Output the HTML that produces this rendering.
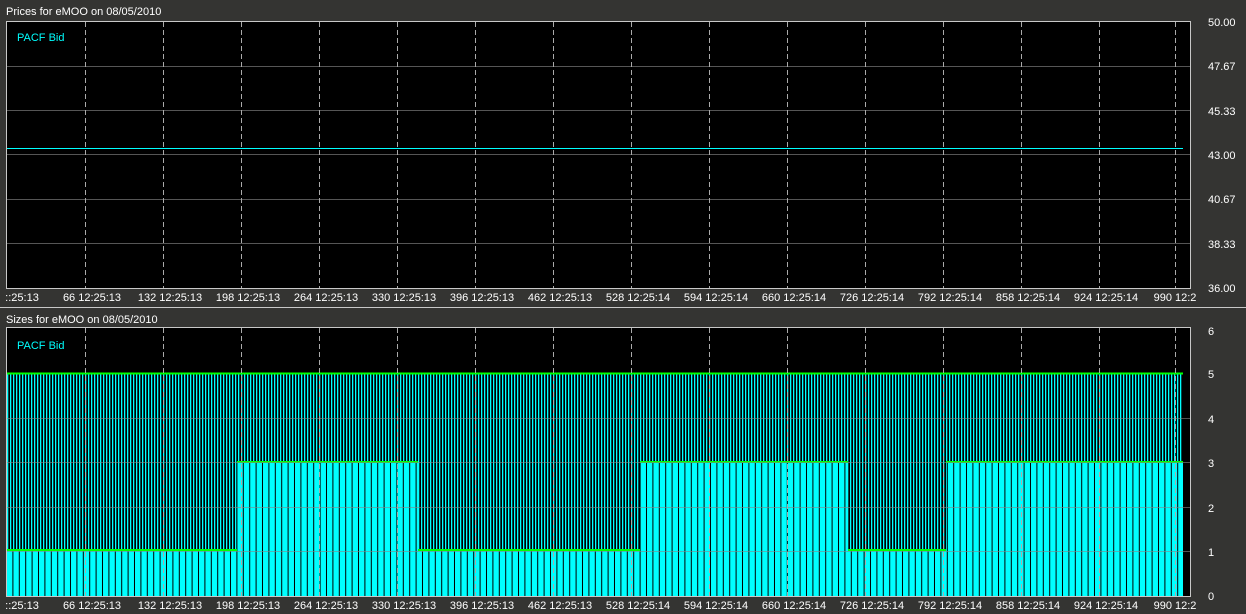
<!DOCTYPE html>
<html><head><meta charset="utf-8"><style>
html,body{margin:0;padding:0;background:#343432;width:1246px;height:614px;overflow:hidden}
svg text{font-family:"Liberation Sans",sans-serif;font-size:11px;fill:#fff}
</style></head><body>
<svg width="1246" height="614" xmlns="http://www.w3.org/2000/svg">
<defs>
<pattern id="thin" x="7" y="0" width="3" height="10" patternUnits="userSpaceOnUse">
<rect width="3" height="10" fill="#000"/><rect width="1.3" height="10" fill="#00ffff"/></pattern>
<pattern id="wide" x="7" y="0" width="6.4" height="10" patternUnits="userSpaceOnUse">
<rect width="6.4" height="10" fill="#00ffff"/><rect x="5.4" width="1" height="10" fill="#000"/></pattern>
</defs>
<text x="6" y="15">Prices for  eMOO  on  08/05/2010</text>
<rect x="6.5" y="21.5" width="1184" height="267" fill="#000" stroke="#c8c8c8"/>
<g stroke="#555" stroke-width="1">
<line x1="7" x2="1190" y1="66.5" y2="66.5"/><line x1="7" x2="1190" y1="110.5" y2="110.5"/>
<line x1="7" x2="1190" y1="154.5" y2="154.5"/><line x1="7" x2="1190" y1="199.5" y2="199.5"/>
<line x1="7" x2="1190" y1="243.5" y2="243.5"/></g>
<g stroke="#aaa" stroke-dasharray="5,3">
<line x1="85.5" x2="85.5" y1="22" y2="288"/><line x1="163.5" x2="163.5" y1="22" y2="288"/><line x1="241.5" x2="241.5" y1="22" y2="288"/><line x1="319.5" x2="319.5" y1="22" y2="288"/><line x1="397.5" x2="397.5" y1="22" y2="288"/><line x1="475.5" x2="475.5" y1="22" y2="288"/><line x1="553.5" x2="553.5" y1="22" y2="288"/><line x1="631.5" x2="631.5" y1="22" y2="288"/><line x1="709.5" x2="709.5" y1="22" y2="288"/><line x1="787.5" x2="787.5" y1="22" y2="288"/><line x1="865.5" x2="865.5" y1="22" y2="288"/><line x1="943.5" x2="943.5" y1="22" y2="288"/><line x1="1021.5" x2="1021.5" y1="22" y2="288"/><line x1="1099.5" x2="1099.5" y1="22" y2="288"/><line x1="1175.5" x2="1175.5" y1="22" y2="288"/></g>
<line x1="7" x2="1183" y1="148.5" y2="148.5" stroke="#00ffff"/>
<text x="17" y="41" style="fill:#00ffff">PACF Bid</text>
<g>
<text x="1208" y="26">50.00</text><text x="1208" y="70">47.67</text><text x="1208" y="115">45.33</text><text x="1208" y="159">43.00</text><text x="1208" y="203">40.67</text><text x="1208" y="248">38.33</text><text x="1208" y="292">36.00</text></g>
<g text-anchor="middle">
<text x="22" y="301">::25:13</text><text x="92" y="301">66 12:25:13</text><text x="170" y="301">132 12:25:13</text><text x="248" y="301">198 12:25:13</text><text x="326" y="301">264 12:25:13</text><text x="404" y="301">330 12:25:13</text><text x="482" y="301">396 12:25:13</text><text x="560" y="301">462 12:25:13</text><text x="638" y="301">528 12:25:14</text><text x="716" y="301">594 12:25:14</text><text x="794" y="301">660 12:25:14</text><text x="872" y="301">726 12:25:14</text><text x="950" y="301">792 12:25:14</text><text x="1028" y="301">858 12:25:14</text><text x="1106" y="301">924 12:25:14</text><text x="1175" y="301">990 12:2</text></g>
<line x1="0" x2="1246" y1="307.5" y2="307.5" stroke="#c8c8c8"/>
<text x="6" y="323">Sizes for  eMOO  on  08/05/2010</text>
<rect x="6.5" y="327.5" width="1184" height="269" fill="#000" stroke="#c8c8c8"/>
<rect x="7" y="373" width="1176" height="223" fill="url(#thin)"/>
<rect x="7" y="550" width="230" height="46" fill="url(#wide)"/>
<rect x="237" y="462" width="181" height="134" fill="url(#wide)"/>
<rect x="418" y="550" width="222" height="46" fill="url(#wide)"/>
<rect x="640" y="462" width="208" height="134" fill="url(#wide)"/>
<rect x="848" y="550" width="98" height="46" fill="url(#wide)"/>
<rect x="946" y="462" width="237" height="134" fill="url(#wide)"/>
<g stroke="#00ff00" stroke-width="2">
<line x1="7" x2="1183" y1="373.5" y2="373.5"/>
<line x1="7" x2="237" y1="550" y2="550"/><line x1="237" x2="418" y1="462" y2="462"/>
<line x1="418" x2="640" y1="550" y2="550"/><line x1="640" x2="848" y1="462" y2="462"/>
<line x1="848" x2="946" y1="550" y2="550"/><line x1="946" x2="1183" y1="462" y2="462"/></g>
<g stroke="#888" stroke-width="1" opacity="0.6">
<line x1="7" x2="1190" y1="418.5" y2="418.5"/><line x1="7" x2="1190" y1="462.5" y2="462.5"/><line x1="7" x2="1190" y1="507.5" y2="507.5"/><line x1="7" x2="1190" y1="551.5" y2="551.5"/></g>
<g stroke="#aaa" stroke-dasharray="5,3">
<line x1="85.5" x2="85.5" y1="328" y2="596"/><line x1="163.5" x2="163.5" y1="328" y2="596"/><line x1="241.5" x2="241.5" y1="328" y2="596"/><line x1="319.5" x2="319.5" y1="328" y2="596"/><line x1="397.5" x2="397.5" y1="328" y2="596"/><line x1="475.5" x2="475.5" y1="328" y2="596"/><line x1="553.5" x2="553.5" y1="328" y2="596"/><line x1="631.5" x2="631.5" y1="328" y2="596"/><line x1="709.5" x2="709.5" y1="328" y2="596"/><line x1="787.5" x2="787.5" y1="328" y2="596"/><line x1="865.5" x2="865.5" y1="328" y2="596"/><line x1="943.5" x2="943.5" y1="328" y2="596"/><line x1="1021.5" x2="1021.5" y1="328" y2="596"/><line x1="1099.5" x2="1099.5" y1="328" y2="596"/><line x1="1175.5" x2="1175.5" y1="328" y2="596"/></g>
<text x="17" y="349" style="fill:#00ffff">PACF Bid</text>
<g>
<text x="1208" y="335">6</text><text x="1208" y="378">5</text><text x="1208" y="423">4</text><text x="1208" y="467">3</text><text x="1208" y="512">2</text><text x="1208" y="556">1</text><text x="1208" y="600">0</text></g>
<g text-anchor="middle">
<text x="22" y="609">::25:13</text><text x="92" y="609">66 12:25:13</text><text x="170" y="609">132 12:25:13</text><text x="248" y="609">198 12:25:13</text><text x="326" y="609">264 12:25:13</text><text x="404" y="609">330 12:25:13</text><text x="482" y="609">396 12:25:13</text><text x="560" y="609">462 12:25:13</text><text x="638" y="609">528 12:25:14</text><text x="716" y="609">594 12:25:14</text><text x="794" y="609">660 12:25:14</text><text x="872" y="609">726 12:25:14</text><text x="950" y="609">792 12:25:14</text><text x="1028" y="609">858 12:25:14</text><text x="1106" y="609">924 12:25:14</text><text x="1175" y="609">990 12:2</text></g>
</svg>
</body></html>
